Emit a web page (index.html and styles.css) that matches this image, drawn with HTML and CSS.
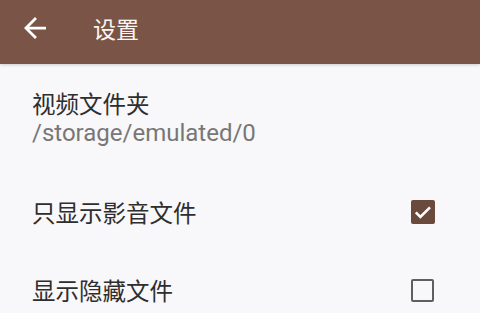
FILE: index.html
```html
<!DOCTYPE html>
<html lang="zh-CN">
<head>
<meta charset="utf-8">
<link rel="stylesheet" href="styles.css">
</head>
<body>
<header class="appbar">
  <svg class="back" viewBox="4 4 16 16" width="22" height="22"><path d="M20 11H7.83l5.59-5.59L12 4l-8 8 8 8 1.41-1.41L7.83 13H20v-2z" fill="#fff"/></svg>
  <span class="title">设置</span>
</header>
<main class="list">
  <div class="item item-first">
    <div class="label">视频文件夹</div>
    <div class="summary">/storage/emulated/0</div>
  </div>
  <div class="item row">
    <div class="label">只显示影音文件</div>
    <span class="box checked"><svg viewBox="0 0 24 24" width="24" height="24"><path d="M4.8 12.4l4.6 4.6 9.6-9.6" fill="none" stroke="#fff" stroke-width="2.6"/></svg></span>
  </div>
  <div class="item row">
    <div class="label">显示隐藏文件</div>
    <span class="box"></span>
  </div>
</main>
</body>
</html>
```
FILE: styles.css
```css
html, body {
  margin: 0;
  padding: 0;
  overflow: hidden;
}
body {
  width: 480px;
  height: 313px;
  background: #f8f7f9;
  font-family: Roboto, "Noto Sans CJK SC", sans-serif;
}
.appbar {
  height: 64px;
  background: #7a5547;
  display: flex;
  align-items: center;
  box-shadow: 0 1px 3px rgba(0,0,0,0.18);
}
.back {
  margin-left: 24px;
  margin-top: -8px;
}
.title {
  margin-left: 47px;
  margin-top: -8px;
  color: #fbf5f2;
  font-size: 23px;
  font-family: "Noto Sans CJK SC", sans-serif;
}
.list {
  height: 249px;
  overflow: hidden;
}
.item {
  padding-left: 32px;
  padding-right: 46px;
}
.item-first {
  padding-top: 24px;
  padding-bottom: 25px;
}
.label {
  font-family: "Noto Sans CJK SC", sans-serif;
  font-size: 23.5px;
  line-height: 30px;
  color: #2e2e2e;
}
.summary {
  font-family: Roboto, sans-serif;
  font-size: 24px;
  line-height: 30px;
  color: #777777;
}
.row {
  height: 78px;
  display: flex;
  align-items: center;
  justify-content: space-between;
}
.box {
  width: 23px;
  height: 23px;
  box-sizing: border-box;
  border: 2.5px solid #5f5f5f;
  border-radius: 2px;
  display: block;
}
.box.checked {
  width: 24px;
  height: 24px;
  margin-right: -0.5px;
  background: #6b4a3e;
  border: none;
}
.box svg {
  display: block;
}
```
